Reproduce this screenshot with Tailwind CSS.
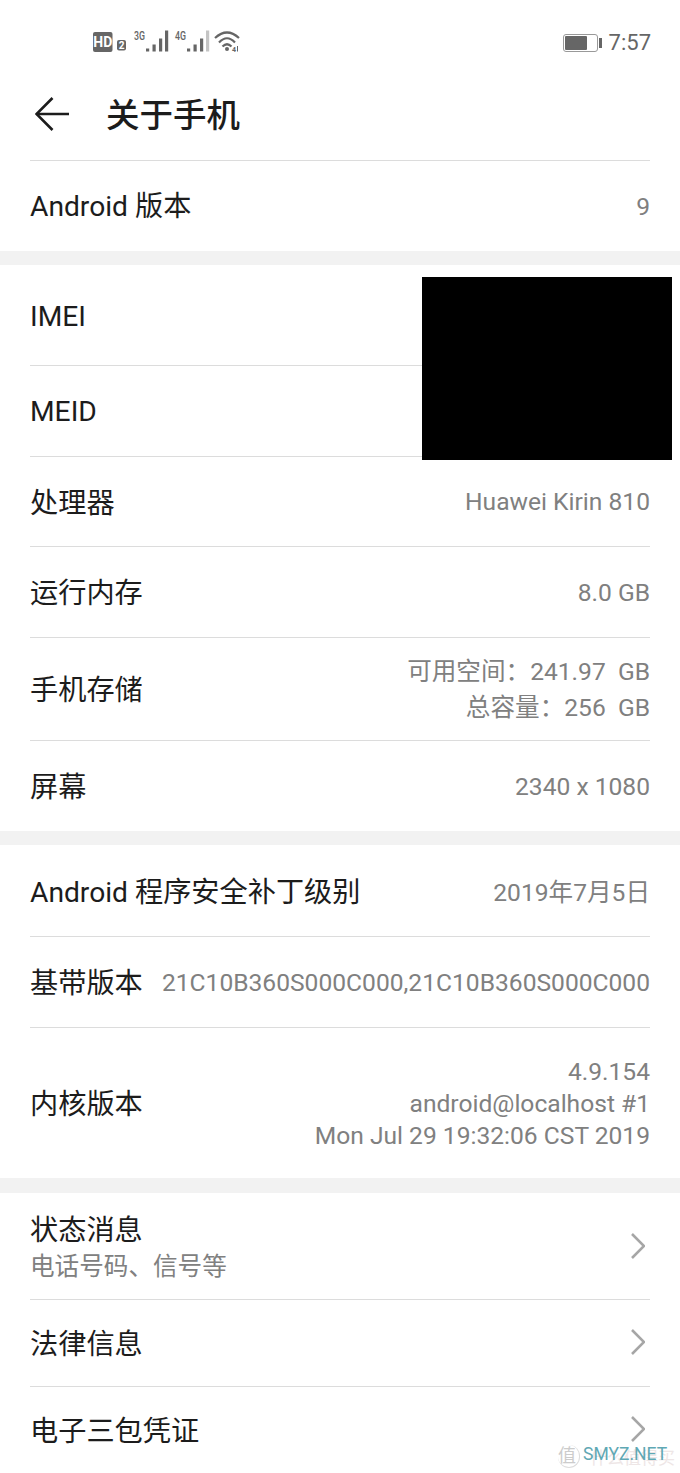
<!DOCTYPE html>
<html lang="zh-CN">
<head>
    <meta charset="UTF-8">
    <meta name="viewport" content="width=device-width, initial-scale=1.0">
    <title>关于手机</title>
    <script src="https://cdn.jsdelivr.net/npm/@tailwindcss/browser@4"></script>
</head>
<body class="bg-white font-['Roboto','Noto_Sans_CJK_SC',sans-serif]">
    <div class="relative w-[680px] h-[1473px] overflow-hidden bg-white text-[#1c1c1c]">
        <!-- Status bar -->
        <div class="h-[70px] flex items-start justify-between pl-[93px] pr-[29px] pt-[28px] text-[#666]">
            <svg width="147" height="26" viewBox="0 0 147 26" class="block">
                <rect x="0" y="4" width="19.500" height="20" rx="2" fill="#666"/>
                <text x="9.750" y="19" text-anchor="middle" font-size="14" font-weight="700" fill="#fff" font-family="Roboto">HD</text>
                <rect x="24" y="12" width="9" height="10.500" rx="2" fill="#666"/>
                <text x="28.500" y="21" text-anchor="middle" font-size="10" font-weight="700" fill="#fff" font-family="Roboto">2</text>
                <text x="41" y="12" font-size="13" font-weight="500" fill="#666" font-family="Roboto" textLength="11" lengthAdjust="spacingAndGlyphs">3G</text>
                <g fill="#666">
                    <rect x="53" y="20.500" width="3.200" height="3"/><rect x="59.500" y="16.500" width="3.200" height="7"/><rect x="66" y="10.500" width="3.200" height="13"/><rect x="72" y="2.500" width="3.200" height="21"/>
                </g>
                <text x="82" y="12" font-size="13" font-weight="500" fill="#666" font-family="Roboto" textLength="11" lengthAdjust="spacingAndGlyphs">4G</text>
                <g fill="#666">
                    <rect x="94" y="20.500" width="3.200" height="3"/><rect x="100.500" y="16.500" width="3.200" height="7"/><rect x="107" y="10.500" width="3.200" height="13"/>
                    <rect x="113" y="2.500" width="3.200" height="21" fill="#c4c4c4"/>
                </g>
                <g fill="none" stroke="#666" stroke-width="2.200">
                    <path d="M122 10 Q134 -1 146 10"/>
                    <path d="M126 14.500 Q134 6 142 14.500"/>
                    <path d="M129.500 18.500 Q134 14 138.500 18.500"/>
                </g>
                <circle cx="134" cy="21" r="2" fill="#666"/>
                <text x="139" y="23.500" font-size="7" font-weight="700" fill="#666" font-family="Roboto">4</text>
                <rect x="144" y="18" width="1" height="5.500" fill="#666"/>
            </svg>
            <div class="flex items-center gap-[7px] h-[28px] pt-[2px]">
                <div class="flex items-center">
                    <div class="w-[35px] h-[18px] rounded-[3px] border border-[#999] p-[1px] flex"><div class="w-[22px] bg-[#666] rounded-[1px]"></div></div>
                    <div class="w-[3px] h-[10px] bg-[#666] ml-[1px]"></div>
                </div>
                <span class="text-[22px] leading-[28px] text-[#666]">7:57</span>
            </div>
        </div>

        <!-- Header -->
        <div class="h-[90px] flex items-center pl-[35px]">
            <svg width="35" height="34" viewBox="0 0 35 34" fill="none" stroke="#1c1c1c" stroke-width="2.600" class="mb-[3px]">
                <path d="M17.500 1 L1.500 17 L17.500 33"/><path d="M1.500 17 H34"/>
            </svg>
            <h1 class="ml-[36px] pt-[2px] text-[33.500px] leading-[40px] font-medium">关于手机</h1>
        </div>

        <!-- Rows -->
        <div class="px-[30px]">
            <div class="h-[91px] border-t border-[#dcdcdc] flex items-center justify-between pt-[2px]">
                <span class="text-[28.200px]">Android 版本</span>
                <span class="text-[24.600px] text-[#808080]">9</span>
            </div>
        </div>
        <div class="h-[14px] bg-[#f2f2f2]"></div>
        <div class="px-[30px]">
            <div class="h-[101px] border-b border-[#dcdcdc] flex items-center text-[28.200px] pt-[4px]">IMEI</div>
            <div class="h-[91px] border-b border-[#dcdcdc] flex items-center text-[28.200px] pt-[2px]">MEID</div>
            <div class="h-[90px] border-b border-[#dcdcdc] flex items-center justify-between pt-[2px]">
                <span class="text-[28.200px] pt-[4px]">处理器</span>
                <span class="text-[24.600px] text-[#808080]">Huawei Kirin 810</span>
            </div>
            <div class="h-[91px] border-b border-[#dcdcdc] flex items-center justify-between pt-[2px]">
                <span class="text-[28.200px] pt-[2px]">运行内存</span>
                <span class="text-[24.600px] text-[#808080]">8.0 GB</span>
            </div>
            <div class="h-[103px] border-b border-[#dcdcdc] flex items-center justify-between pt-[2px]">
                <span class="text-[28.200px] pt-[2px]">手机存储</span>
                <div class="text-[24.600px] leading-[36px] text-[#808080] text-right">
                    <p>可用空间<span class="font-['Noto_Sans_CJK_TC'] leading-none">：</span>241.97&nbsp; GB</p>
                    <p>总容量<span class="font-['Noto_Sans_CJK_TC'] leading-none">：</span>256&nbsp; GB</p>
                </div>
            </div>
            <div class="h-[90px] flex items-center justify-between pt-[2px]">
                <span class="text-[28.200px] pt-[2px]">屏幕</span>
                <span class="text-[24.600px] text-[#808080]">2340 x 1080</span>
            </div>
        </div>
        <div class="h-[14px] bg-[#f2f2f2]"></div>
        <div class="px-[30px]">
            <div class="h-[92px] border-b border-[#dcdcdc] flex items-center justify-between pt-[2px]">
                <span class="text-[28.200px] pt-[4px]">Android 程序安全补丁级别</span>
                <span class="text-[24.600px] text-[#808080] pt-[4px]">2019年7月5日</span>
            </div>
            <div class="h-[91px] border-b border-[#dcdcdc] flex items-center justify-between pt-[2px]">
                <span class="text-[28.200px] pt-[2px]">基带版本</span>
                <span class="text-[24.600px] text-[#808080]">21C10B360S000C000,21C10B360S000C000</span>
            </div>
            <div class="h-[150px] flex items-center justify-between pt-[2px]">
                <span class="text-[28.200px] pt-[2px]">内核版本</span>
                <div class="text-[24.600px] leading-[32px] text-[#808080] text-right">
                    <p>4.9.154</p>
                    <p>android@localhost #1</p>
                    <p>Mon Jul 29 19:32:06 CST 2019</p>
                </div>
            </div>
        </div>
        <div class="h-[15px] bg-[#f2f2f2]"></div>
        <div class="px-[30px]">
            <div class="h-[107px] border-b border-[#dcdcdc] flex items-center justify-between">
                <div class="pt-[6px]">
                    <p class="text-[28.200px] leading-[36px]">状态消息</p>
                    <p class="text-[24.600px] leading-[36px] text-[#808080]">电话号码、信号等</p>
                </div>
                <svg width="14" height="26" viewBox="0 0 14 26" fill="none" stroke="#a6a6a6" stroke-width="2.600" class="mr-[5px] mb-[1px]"><path d="M1 1 L13 13 L1 25"/></svg>
            </div>
            <div class="h-[87px] border-b border-[#dcdcdc] flex items-center justify-between">
                <span class="text-[28.200px] pt-[4px]">法律信息</span>
                <svg width="14" height="26" viewBox="0 0 14 26" fill="none" stroke="#a6a6a6" stroke-width="2.600" class="mr-[5px] mb-[2px]"><path d="M1 1 L13 13 L1 25"/></svg>
            </div>
            <div class="h-[86px] flex items-center justify-between">
                <span class="text-[28.200px] pt-[4px]">电子三包凭证</span>
                <svg width="14" height="26" viewBox="0 0 14 26" fill="none" stroke="#a6a6a6" stroke-width="2.600" class="mr-[5px] mb-[3px]"><path d="M1 1 L13 13 L1 25"/></svg>
            </div>
        </div>

        <!-- Redaction block -->
        <div class="absolute left-[422px] top-[277px] w-[250px] h-[183px] bg-black"></div>

        <!-- Watermark -->
        <div class="absolute left-[558px] top-[1445px] w-[22px] h-[23px] rounded-full border-r border-b border-[#ddd] text-[18px] leading-[22px] text-[#ccc]">值</div>
        <div class="absolute left-[590px] top-[1448px] text-[17px] leading-[20px] text-[#eee6e6]">什么值得买</div>
        <div class="absolute left-[583px] top-[1442px] text-[17.500px] leading-[24px] text-[#5fa8b4]">SMYZ.NET</div>
    </div>
</body>
</html>
